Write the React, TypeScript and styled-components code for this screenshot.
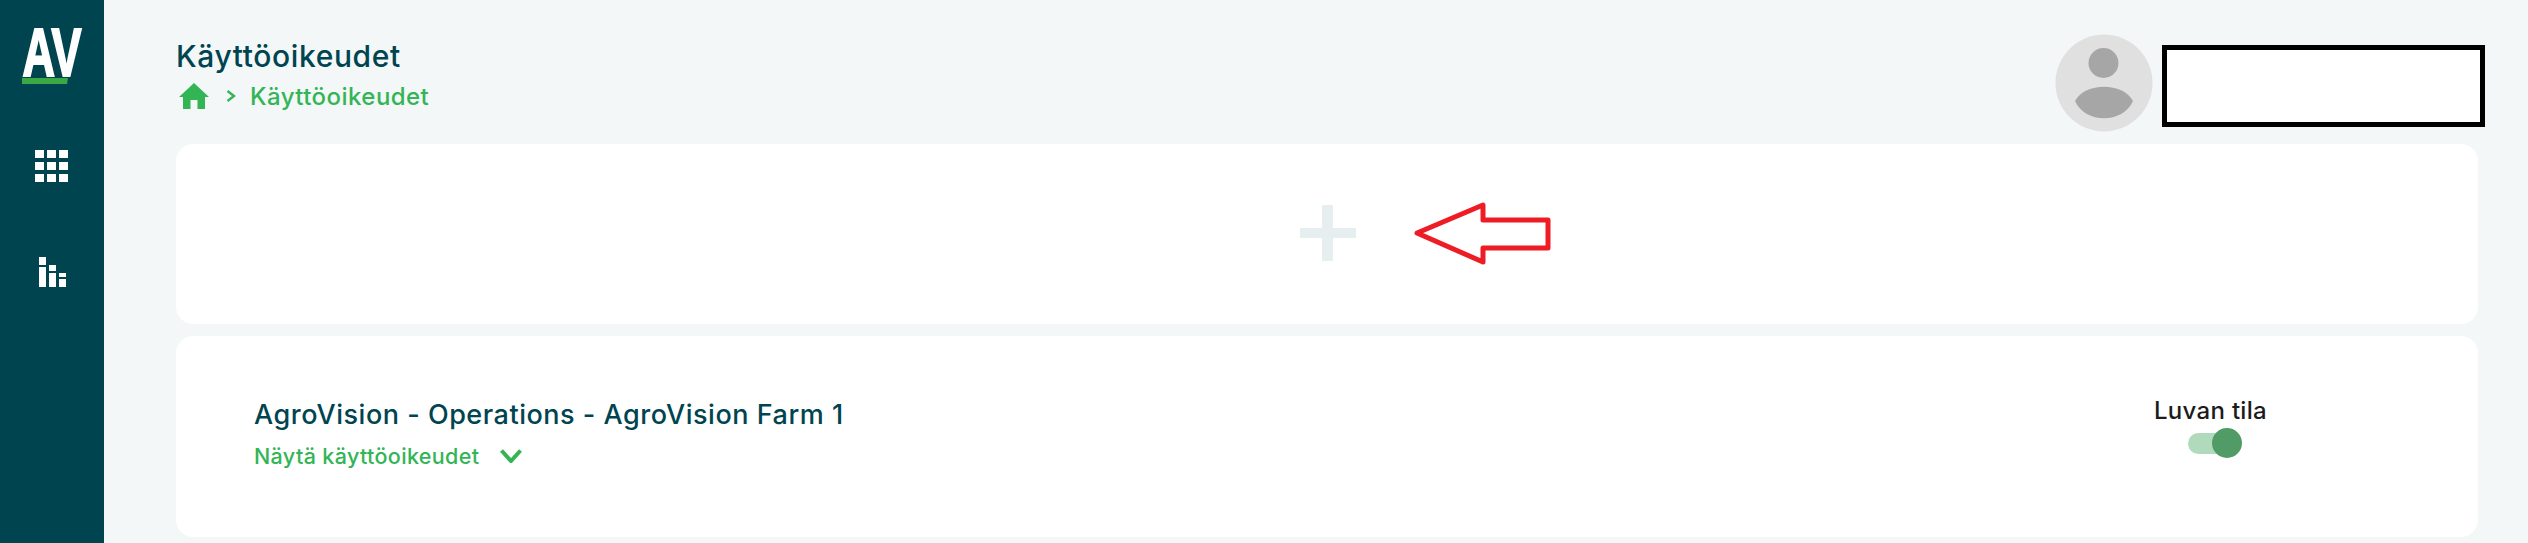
import React from "react";
import styled, { createGlobalStyle } from "styled-components";

const Global = createGlobalStyle`
  html, body { margin: 0; padding: 0; height: 100%; background: #f3f7f8; overflow: hidden; }
  body { font-family: Inter, "Noto Sans", "Liberation Sans", sans-serif; }
`;
const Page = styled.div`display: flex; width: 2528px; height: 543px; background: #f3f7f8; overflow: hidden;`;
const Sidebar = styled.nav`
  width: 104px; flex: none; background: #004450; display: flex; flex-direction: column;
`;
const LogoWrap = styled.div`padding: 26px 0 0 22px; height: 150px; box-sizing: border-box;`;
const LogoSvg = styled.svg`display: block; overflow: visible;`;
const NavIcon = styled.svg`display: block; margin-left: 35px;`;
const BarsIcon = styled(NavIcon)`margin-left: 39px; margin-top: 75px;`;
const Main = styled.main`flex: 1; min-width: 0; padding: 0 43px 0 72px;`;
const Header = styled.header`height: 144px; display: flex; justify-content: space-between; box-sizing: border-box; padding-top: 34px;`;
const TitleBlock = styled.div`padding-top: 3px;`;
const Title = styled.h1`
  margin: 0; font-size: 30px; line-height: 38px; font-weight: 500; color: #004450; letter-spacing: 0.62px;
`;
const Crumbs = styled.div`display: flex; align-items: center; margin-top: 8px; height: 26px; padding-left: 3px;`;
const CrumbSep = styled.svg`margin: 0 15px 0 17px;`;
const CrumbText = styled.span`font-size: 24px; font-weight: 500; color: #33b556; letter-spacing: 0.45px; margin-left: -1px;`;
const User = styled.div`display: flex; align-items: flex-start; gap: 9px;`;
const Avatar = styled.svg`display: block;`;
const NameBox = styled.div`
  width: 323px; height: 82px; margin-top: 11px; box-sizing: border-box; background: #fff; border: 5px solid #000;
`;
const Card = styled.section`background: #fff; border-radius: 17px; margin-right: 7px;`;
const AddCard = styled(Card)`
  position: relative; height: 180px; display: flex; align-items: center; justify-content: center; margin-bottom: 12px;
`;
const PlusIcon = styled.svg`display: block; margin: 0 0 2px 2px;`;
const Arrow = styled.svg`position: absolute; left: 1237px; top: 58px;`;
const PermissionCard = styled(Card)`
  height: 201px; display: flex; justify-content: space-between; box-sizing: border-box; padding: 0 211px 0 78px;
`;
const PermInfo = styled.div`padding-top: 60px;`;
const PermTitle = styled.h2`margin: 0; font-size: 27px; line-height: 38px; font-weight: 500; color: #004450; letter-spacing: 0.52px;`;
const Toggler = styled.div`display: flex; align-items: center; margin-top: 8px; height: 28px;`;
const TogglerText = styled.span`font-size: 21.5px; font-weight: 500; color: #33b556; letter-spacing: 0.35px;`;
const Chevron = styled.svg`margin-left: 21px;`;
const StatusBlock = styled.div`display: flex; flex-direction: column; align-items: center; padding-top: 60px;`;
const StatusLabel = styled.div`font-size: 24px; line-height: 30px; font-weight: 500; color: #1c1c1c; letter-spacing: 0.3px;`;
const Track = styled.div`position: relative; width: 44px; height: 21px; border-radius: 11px; background: #b0dabb; margin: 7px 0 0 0;`;
const Knob = styled.div`position: absolute; right: -10px; top: -5px; width: 30px; height: 30px; border-radius: 50%; background: #509b66;`;

export default function App() {
  return (
    <Page>
      <Global />
      <Sidebar>
        <LogoWrap>
          <LogoSvg width="60" height="60" viewBox="0 0 60 60">
            <text x="0.5" y="50" fontFamily="Liberation Sans" fontWeight="700" fontSize="68" fill="#fff" stroke="#fff" strokeWidth="2.2" textLength="59" lengthAdjust="spacingAndGlyphs">AV</text>
            <polygon points="0,52 46,52 45,58 0,58" fill="#3aa845" />
          </LogoSvg>
        </LogoWrap>
        <NavIcon width="33" height="32" viewBox="0 0 33 32" fill="#fff">
          {[0, 12, 24].map((y) =>
            [0, 12, 24].map((x) => <rect key={`${x}-${y}`} x={x} y={y} width="9" height="8" />)
          )}
        </NavIcon>
        <BarsIcon width="27" height="30" viewBox="0 0 27 30" fill="#fff">
          <rect x="0" y="0" width="7" height="8" />
          <rect x="0" y="10" width="7" height="20" />
          <rect x="10" y="8" width="7" height="6" />
          <rect x="10" y="16" width="7" height="14" />
          <rect x="20" y="16" width="7" height="4" />
          <rect x="20" y="22" width="7" height="8" />
        </BarsIcon>
      </Sidebar>
      <Main>
        <Header>
          <TitleBlock>
            <Title>Käyttöoikeudet</Title>
            <Crumbs>
              <svg width="30" height="26" viewBox="0 0 30 26" fill="#33b556">
                <path d="M15 0 L30 14 L26 14 L26 26 L18.5 26 L18.5 17 L11.5 17 L11.5 26 L4 26 L4 14 L0 14 Z" />
              </svg>
              <CrumbSep width="10" height="12" viewBox="0 0 10 12" fill="none" stroke="#33b556" strokeWidth="2.4">
                <path d="M1.5 1 L8 6 L1.5 11" />
              </CrumbSep>
              <CrumbText>Käyttöoikeudet</CrumbText>
            </Crumbs>
          </TitleBlock>
          <User>
            <Avatar width="98" height="98" viewBox="0 0 98 98">
              <circle cx="49" cy="49" r="48.5" fill="#e0e0e0" />
              <circle cx="48.5" cy="29" r="15" fill="#a6a6a6" />
              <path d="M20 67 C30 48 68 48 78 67 C68 90 30 90 20 67 Z" fill="#a6a6a6" />
            </Avatar>
            <NameBox />
          </User>
        </Header>
        <AddCard>
          <PlusIcon width="56" height="56" viewBox="0 0 56 56" fill="#e6eeef">
            <rect x="22" y="0" width="11" height="56" />
            <rect x="0" y="23" width="56" height="10" />
          </PlusIcon>
          <Arrow width="140" height="66" viewBox="0 0 140 66" fill="none" stroke="#ee1c25" strokeWidth="5" strokeLinejoin="round">
            <path d="M4 31 L70 3 L70 18 L135 18 L135 46 L70 46 L70 60 Z" />
          </Arrow>
        </AddCard>
        <PermissionCard>
          <PermInfo>
            <PermTitle>AgroVision - Operations - AgroVision Farm 1</PermTitle>
            <Toggler>
              <TogglerText>Näytä käyttöoikeudet</TogglerText>
              <Chevron width="22" height="14" viewBox="0 0 22 14" fill="none" stroke="#33b556" strokeWidth="4">
                <path d="M1.5 1.5 L11 12 L20.5 1.5" />
              </Chevron>
            </Toggler>
          </PermInfo>
          <StatusBlock>
            <StatusLabel>Luvan tila</StatusLabel>
            <Track><Knob /></Track>
          </StatusBlock>
        </PermissionCard>
      </Main>
    </Page>
  );
}
